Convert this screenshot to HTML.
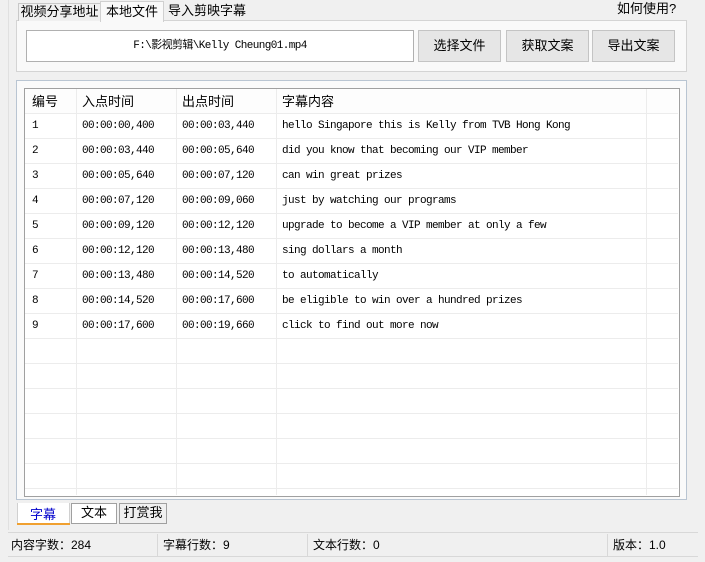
<!DOCTYPE html>
<html><head><meta charset="utf-8"><style>
*{box-sizing:border-box;margin:0;padding:0}
body{width:705px;height:562px;background:#f0f0f0;position:relative;overflow:hidden;font-family:"Liberation Sans","Noto Sans CJK SC",sans-serif;font-size:12px;color:#000}
.a{position:absolute}
.tab{position:absolute;top:3px;height:18px;border:1px solid #c8c8c8;border-bottom:none;background:#f0f0f0;font-size:13px;line-height:16px;text-align:center}
.btn{position:absolute;top:30px;height:32px;width:83px;border:1px solid #c4c4c4;background:#e6e6e6;font-size:13px;line-height:30px;text-align:center}
.mono{font-family:"Liberation Mono","Noto Sans CJK SC",monospace;font-size:11px;letter-spacing:-0.6px}
.hl{position:absolute;left:25px;width:653px;height:1px;background:#ececec}
.vl{position:absolute;top:89px;width:1px;height:406px;background:#ececec}
.cell{position:absolute;height:25px;line-height:25px}
.st{position:absolute;top:534px;height:22px;line-height:22px;font-size:12px}
</style></head><body>
<div class="a" style="left:8px;top:0;width:1px;height:530px;background:#e0e0e0"></div>
<div class="a" style="left:16px;top:20px;width:671px;height:52px;border:1px solid #d4d4d4;background:#f9f9f9"></div>
<div class="tab" style="left:18px;width:83px">视频分享地址</div>
<div class="tab" style="left:100px;top:1px;height:21px;width:64px;background:#f9f9f9;border-color:#d0d0d0;line-height:20px">本地文件</div>
<div class="tab" style="left:164px;width:86px;border:none;background:transparent">导入剪映字幕</div>
<div class="a" style="left:617px;top:1px;font-size:13px;line-height:16px">如何使用?</div>
<div class="a mono" style="left:26px;top:30px;width:388px;height:32px;border:1px solid #b0b0b0;background:#fff;line-height:30px;text-align:center">F:\影视剪辑\Kelly Cheung01.mp4</div>
<div class="btn" style="left:418px">选择文件</div>
<div class="btn" style="left:506px">获取文案</div>
<div class="btn" style="left:592px">导出文案</div>

<div class="a" style="left:16px;top:80px;width:671px;height:420px;border:1px solid #b9c5d2;background:#fafafa"></div>
<div class="a" style="left:24px;top:88px;width:656px;height:409px;border:1px solid #a0a0a0;background:#fff"></div>
<div class="a" style="left:25px;top:89px;width:653px;height:24px;background:#fdfdfd"></div>
<div class="vl" style="left:76px"></div><div class="vl" style="left:176px"></div><div class="vl" style="left:276px"></div><div class="vl" style="left:646px"></div>
<div class="hl" style="top:113px"></div><div class="hl" style="top:138px"></div><div class="hl" style="top:163px"></div><div class="hl" style="top:188px"></div><div class="hl" style="top:213px"></div><div class="hl" style="top:238px"></div><div class="hl" style="top:263px"></div><div class="hl" style="top:288px"></div><div class="hl" style="top:313px"></div><div class="hl" style="top:338px"></div><div class="hl" style="top:363px"></div><div class="hl" style="top:388px"></div><div class="hl" style="top:413px"></div><div class="hl" style="top:438px"></div><div class="hl" style="top:463px"></div><div class="hl" style="top:488px"></div>
<div class="cell" style="left:32px;top:89px;font-size:13px">编号</div>
<div class="cell" style="left:82px;top:89px;font-size:13px">入点时间</div>
<div class="cell" style="left:182px;top:89px;font-size:13px">出点时间</div>
<div class="cell" style="left:282px;top:89px;font-size:13px">字幕内容</div>
<div class="a mono" style="left:32px;top:114px;line-height:25px">1<br>2<br>3<br>4<br>5<br>6<br>7<br>8<br>9</div>
<div class="a mono" style="left:82px;top:114px;line-height:25px">00:00:00,400<br>00:00:03,440<br>00:00:05,640<br>00:00:07,120<br>00:00:09,120<br>00:00:12,120<br>00:00:13,480<br>00:00:14,520<br>00:00:17,600</div>
<div class="a mono" style="left:182px;top:114px;line-height:25px">00:00:03,440<br>00:00:05,640<br>00:00:07,120<br>00:00:09,060<br>00:00:12,120<br>00:00:13,480<br>00:00:14,520<br>00:00:17,600<br>00:00:19,660</div>
<div class="a mono" style="left:282px;top:114px;line-height:25px;white-space:pre">hello Singapore this is Kelly from TVB Hong Kong
did you know that becoming our VIP member
can win great prizes
just by watching our programs
upgrade to become a VIP member at only a few
sing dollars a month
to automatically
be eligible to win over a hundred prizes
click to find out more now</div>

<div class="a" style="left:17px;top:503px;width:53px;height:22px;background:#fff;border:1px solid #d0d0d0;border-top:none"></div>
<div class="a" style="left:17px;top:523px;width:53px;height:2px;background:#f0a030"></div>
<div class="a" style="left:30px;top:506px;font-size:13px;color:#0000cc;line-height:18px">字幕</div>
<div class="a" style="left:71px;top:503px;width:46px;height:21px;border:1px solid #a0a0a0;background:#fff;font-size:13px;line-height:18px;text-align:center">文本</div>
<div class="a" style="left:119px;top:503px;width:48px;height:21px;border:1px solid #a0a0a0;background:#f0f0f0;font-size:13px;line-height:18px;text-align:center">打赏我</div>

<div class="a" style="left:8px;top:532px;width:690px;height:25px;border-top:1px solid #d8d8d8;border-bottom:1px solid #d8d8d8"></div>
<div class="a" style="left:157px;top:534px;width:1px;height:22px;background:#d8d8d8"></div>
<div class="a" style="left:307px;top:534px;width:1px;height:22px;background:#d8d8d8"></div>
<div class="a" style="left:607px;top:534px;width:1px;height:22px;background:#d8d8d8"></div>
<div class="st" style="left:11px">内容字数：284</div>
<div class="st" style="left:163px">字幕行数：9</div>
<div class="st" style="left:313px">文本行数：0</div>
<div class="st" style="left:613px">版本：1.0</div>
</body></html>
